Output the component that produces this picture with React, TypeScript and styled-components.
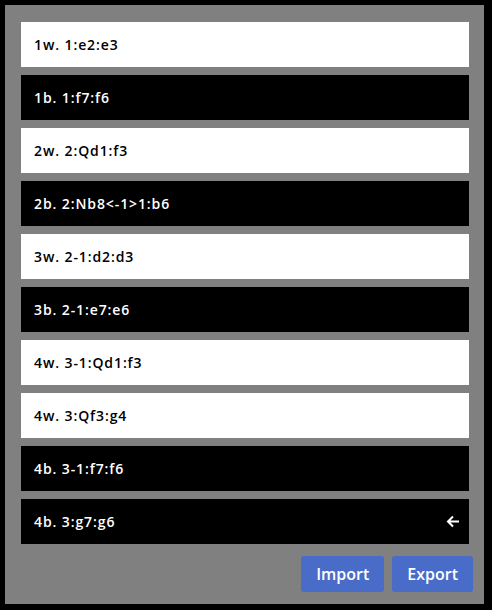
import React from 'react';
import styled, { createGlobalStyle } from 'styled-components';

const moves = [
  { text: '1w. 1:e2:e3', side: 'w' },
  { text: '1b. 1:f7:f6', side: 'b' },
  { text: '2w. 2:Qd1:f3', side: 'w' },
  { text: '2b. 2:Nb8<-1>1:b6', side: 'b' },
  { text: '3w. 2-1:d2:d3', side: 'w' },
  { text: '3b. 2-1:e7:e6', side: 'b' },
  { text: '4w. 3-1:Qd1:f3', side: 'w' },
  { text: '4w. 3:Qf3:g4', side: 'w' },
  { text: '4b. 3-1:f7:f6', side: 'b' },
  { text: '4b. 3:g7:g6', side: 'b', current: true }
];

const GlobalStyle = createGlobalStyle`
  html, body {
    margin: 0;
    padding: 0;
    background: #000;
  }
  body {
    font-family: "Open Sans", "Noto Sans", sans-serif;
  }
`;

const Frame = styled.div`
  width: 492px;
  height: 610px;
  box-sizing: border-box;
  padding: 5px 8px 6px 5px;
  background: #000;
`;

const Panel = styled.div`
  height: 100%;
  box-sizing: border-box;
  background: #808080;
  padding: 17px 11px 0 16px;
  display: flex;
  flex-direction: column;
`;

const MoveList = styled.ul`
  list-style: none;
  margin: 0 4px 0 0;
  padding: 0;
  display: flex;
  flex-direction: column;
  gap: 8px;
`;

const MoveRow = styled.li<{ $side: string }>`
  height: 45px;
  display: flex;
  align-items: center;
  justify-content: space-between;
  padding: 0 9px 0 13px;
  background: ${(p) => (p.$side === 'w' ? '#fff' : '#000')};
  color: ${(p) => (p.$side === 'w' ? '#000' : '#fff')};
  font-size: 14px;
  font-weight: 600;
  letter-spacing: 0.9px;
`;

const Actions = styled.div`
  display: flex;
  justify-content: flex-end;
  gap: 8px;
  margin-top: 12px;
`;

const Button = styled.button`
  height: 36px;
  padding: 0 15px;
  border: none;
  border-radius: 3px;
  background: #4a6cc9;
  color: #fff;
  font-family: "Open Sans", "Noto Sans", sans-serif;
  font-size: 16px;
  font-weight: 600;
`;

const Arrow = () => (
  <svg width="14" height="13" viewBox="0 0 14 13" fill="none">
    <path d="M13 6.5H2M7 1.5L2 6.5l5 5" stroke="#fff" strokeWidth="2" />
  </svg>
);

export default function App() {
  return (
    <Frame>
      <GlobalStyle />
      <Panel>
        <MoveList>
          {moves.map((m, i) => (
            <MoveRow key={i} $side={m.side}>
              <span>{m.text}</span>
              {m.current && <Arrow />}
            </MoveRow>
          ))}
        </MoveList>
        <Actions>
          <Button>Import</Button>
          <Button>Export</Button>
        </Actions>
      </Panel>
    </Frame>
  );
}
